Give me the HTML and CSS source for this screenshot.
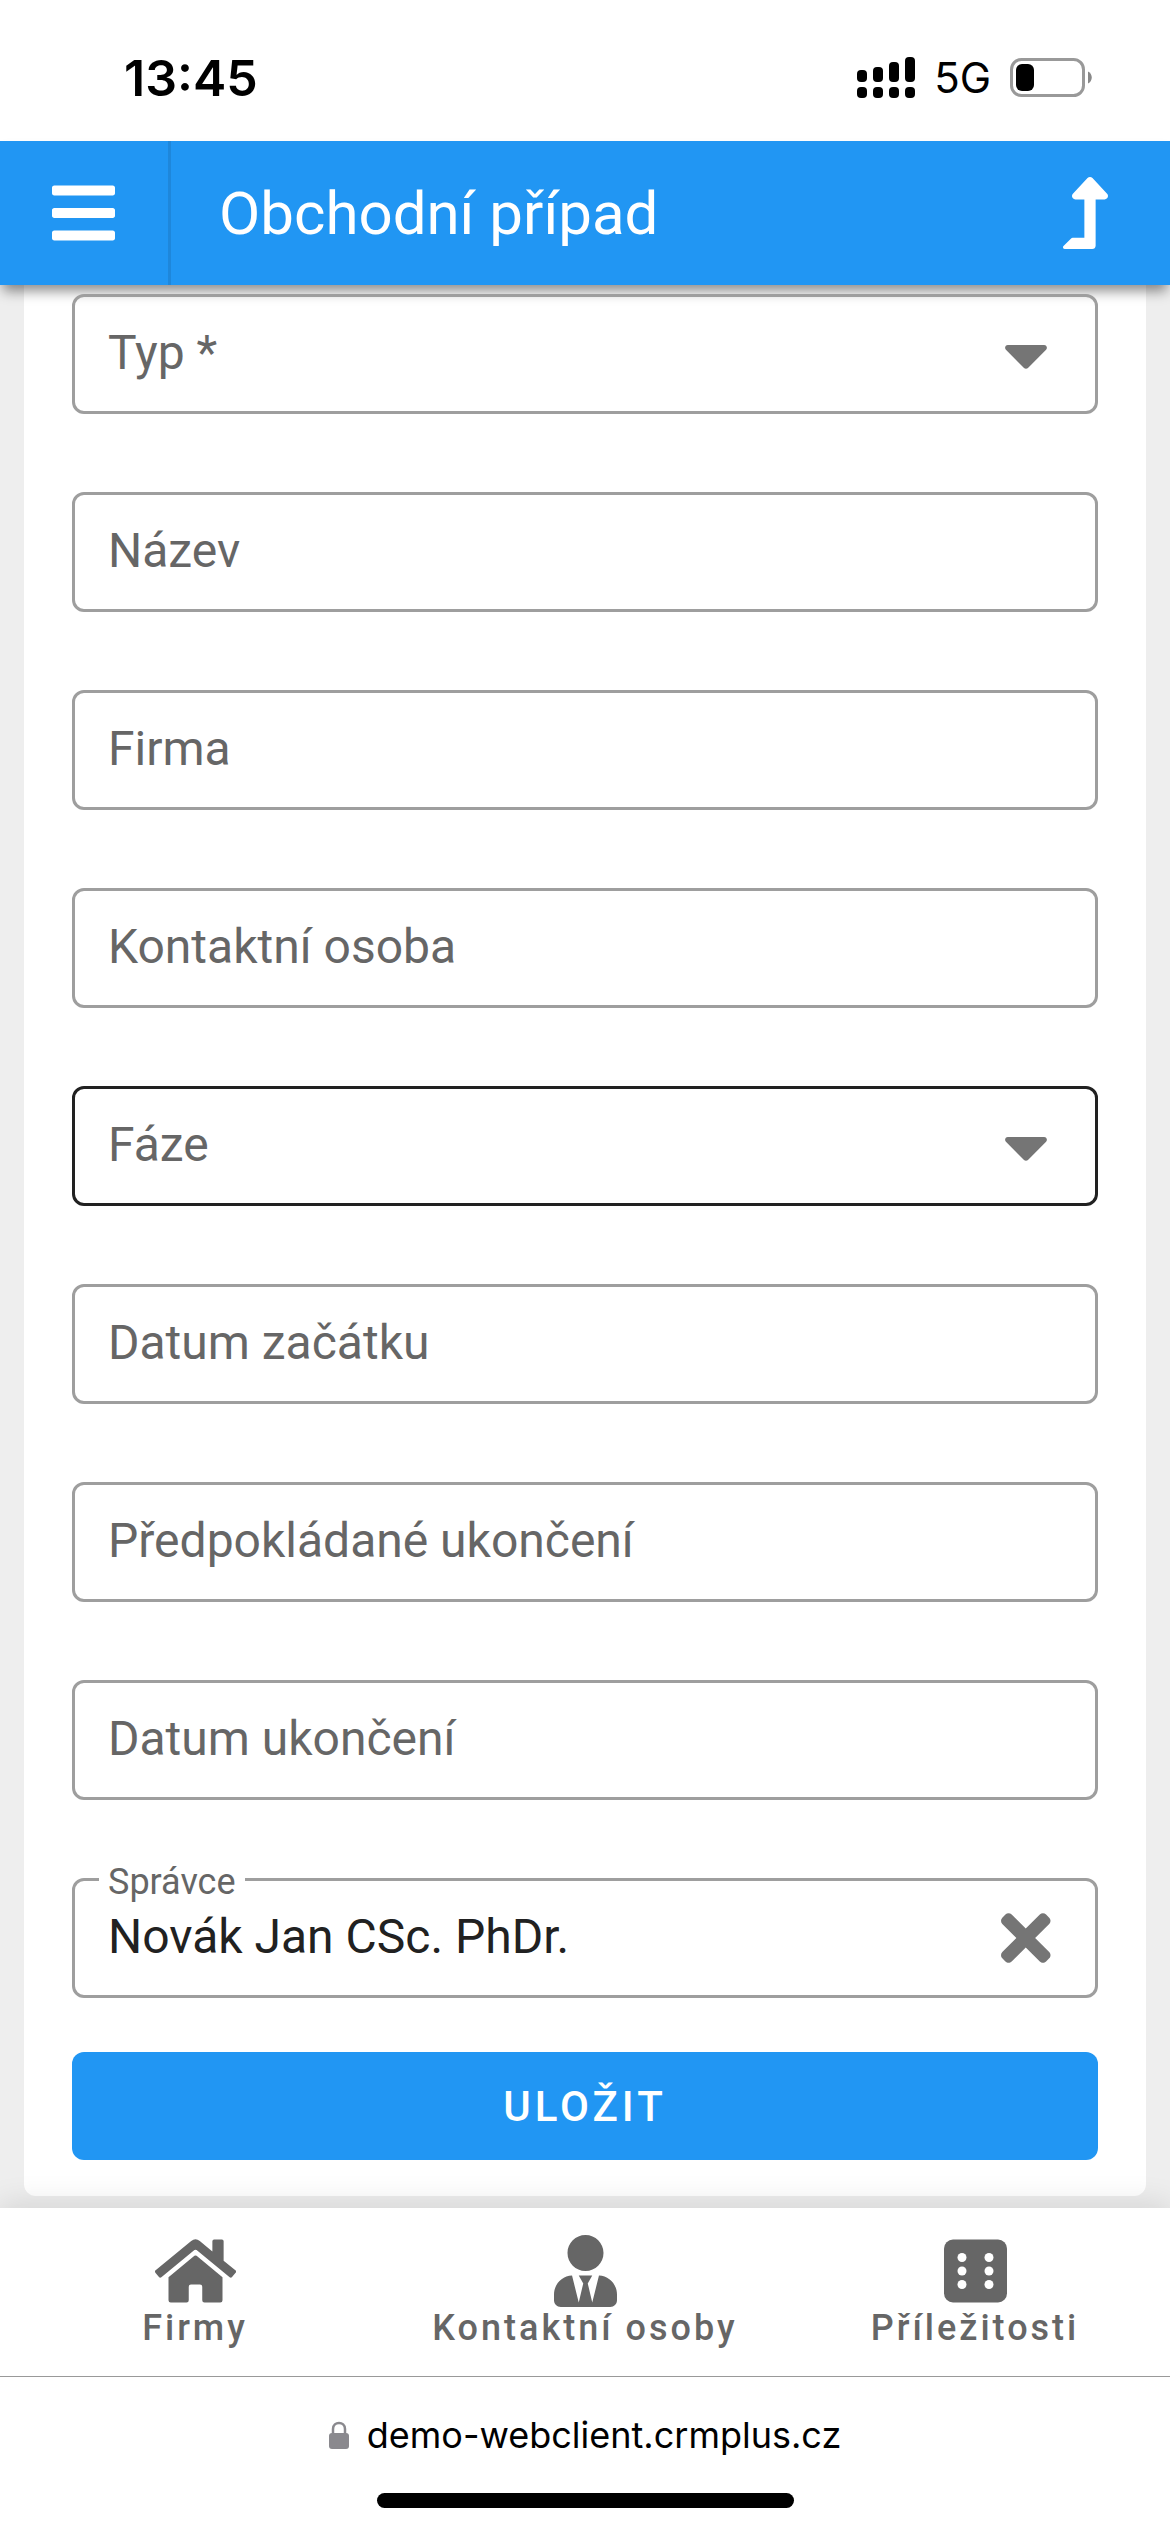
FILE: index.html
```
<!DOCTYPE html>
<html lang="cs">
<head>
    <meta charset="UTF-8">
    <meta name="viewport" content="width=device-width, initial-scale=1.0">
    <title>Obchodní případ</title>
    <link rel="stylesheet" href="styles.css">
</head>
<body>
    <!-- Status bar -->
    <div class="status-bar">
        <span class="status-time">13:45</span>
        <div class="status-icons">
            <svg class="signal-icon" viewBox="0 0 58 42" aria-hidden="true">
                <rect x="0" y="13" width="10" height="12" rx="4"/>
                <rect x="16" y="10" width="10" height="15" rx="4"/>
                <rect x="32" y="5" width="10" height="20" rx="4"/>
                <rect x="48" y="0" width="10" height="25" rx="4"/>
                <rect x="0" y="30" width="10" height="11" rx="4"/>
                <rect x="16" y="30" width="10" height="11" rx="4"/>
                <rect x="32" y="30" width="10" height="11" rx="4"/>
                <rect x="48" y="30" width="10" height="11" rx="4"/>
            </svg>
            <span class="status-network">5G</span>
            <svg class="battery-icon" viewBox="0 0 82 40" aria-hidden="true">
                <rect x="1.5" y="1.5" width="72" height="36" rx="10" fill="none" stroke="#999" stroke-width="3"/>
                <rect x="6" y="6" width="18" height="27" rx="6"/>
                <path d="M78 13.500c5 2 5 10 0 12z" fill="#888"/>
            </svg>
        </div>
    </div>

    <!-- Header -->
    <header class="app-header">
        <button type="button" class="menu-button" aria-label="Menu">
            <svg class="icon" viewBox="0 0 448 512"><path d="M16 132h416c8.837 0 16-7.163 16-16V76c0-8.837-7.163-16-16-16H16C7.163 60 0 67.163 0 76v40c0 8.837 7.163 16 16 16zm0 160h416c8.837 0 16-7.163 16-16v-40c0-8.837-7.163-16-16-16H16c-8.837 0-16 7.163-16 16v40c0 8.837 7.163 16 16 16zm0 160h416c8.837 0 16-7.163 16-16v-40c0-8.837-7.163-16-16-16H16c-8.837 0-16 7.163-16 16v40c0 8.837 7.163 16 16 16z"/></svg>
        </button>
        <h1>Obchodní případ</h1>
        <button type="button" class="up-button" aria-label="O úroveň výš">
            <svg class="icon" viewBox="0 0 320 512"><path d="M313.553 119.669L209.587 7.666c-9.485-10.214-25.676-10.229-35.174 0L70.438 119.669C56.232 134.969 67.062 160 88.025 160H152v272H68.024a11.996 11.996 0 0 0-8.485 3.515l-56 56C-4.021 499.074 1.333 512 12.024 512H208c13.255 0 24-10.745 24-24V160h63.966c20.878 0 31.851-24.969 17.587-40.331z"/></svg>
        </button>
    </header>

    <!-- Form -->
    <main>
        <form class="card">
            <div class="fields">
                <div class="field">
                    <label for="type">Typ *</label>
                    <select id="type" name="type" required>
                        <option value=""></option>
                    </select>
                    <svg class="icon field-icon" viewBox="0 0 320 512"><path d="M31.3 192h257.3c17.8 0 26.7 21.5 14.1 34.1L174.1 354.7c-7.8 7.8-20.5 7.8-28.3 0L17.2 226.1C4.6 213.5 13.5 192 31.3 192z"/></svg>
                </div>
                <div class="field">
                    <label for="name">Název</label>
                    <input type="text" id="name" name="name">
                </div>
                <div class="field">
                    <label for="company">Firma</label>
                    <input type="text" id="company" name="company">
                </div>
                <div class="field">
                    <label for="contact">Kontaktní osoba</label>
                    <input type="text" id="contact" name="contact">
                </div>
                <div class="field active">
                    <label for="phase">Fáze</label>
                    <select id="phase" name="phase">
                        <option value=""></option>
                    </select>
                    <svg class="icon field-icon" viewBox="0 0 320 512"><path d="M31.3 192h257.3c17.8 0 26.7 21.5 14.1 34.1L174.1 354.7c-7.8 7.8-20.5 7.8-28.3 0L17.2 226.1C4.6 213.5 13.5 192 31.3 192z"/></svg>
                </div>
                <div class="field">
                    <label for="startDate">Datum začátku</label>
                    <input type="text" id="startDate" name="startDate">
                </div>
                <div class="field">
                    <label for="expectedDate">Předpokládané ukončení</label>
                    <input type="text" id="expectedDate" name="expectedDate">
                </div>
                <div class="field">
                    <label for="endDate">Datum ukončení</label>
                    <input type="text" id="endDate" name="endDate">
                </div>
                <div class="field filled">
                    <label for="manager">Správce</label>
                    <input type="text" id="manager" name="manager" value="Novák Jan CSc. PhDr.">
                    <button type="button" class="clear-button" aria-label="Vymazat">
                        <svg class="icon" viewBox="0 0 352 512"><path d="M242.72 256l100.07-100.07c12.28-12.28 12.28-32.19 0-44.48l-22.24-22.24c-12.28-12.28-32.19-12.28-44.48 0L176 189.28 75.93 89.21c-12.28-12.28-32.19-12.28-44.48 0L9.21 111.45c-12.28 12.28-12.28 32.19 0 44.48L109.28 256 9.21 356.07c-12.28 12.28-12.28 32.19 0 44.48l22.24 22.24c12.28 12.28 32.2 12.28 44.48 0L176 322.72l100.07 100.07c12.28 12.28 32.2 12.28 44.48 0l22.24-22.24c12.28-12.28 12.28-32.19 0-44.48L242.72 256z"/></svg>
                    </button>
                </div>
            </div>
            <button type="submit" class="save-button">Uložit</button>
        </form>
    </main>

    <!-- Bottom navigation -->
    <nav class="bottom-nav">
        <a href="#firmy">
            <svg class="icon" viewBox="0 0 576 512"><path d="M280.37 148.26L96 300.11V464a16 16 0 0 0 16 16l112.06-.29a16 16 0 0 0 15.92-16V368a16 16 0 0 1 16-16h64a16 16 0 0 1 16 16v95.64a16 16 0 0 0 16 16.05L464 480a16 16 0 0 0 16-16V300L295.67 148.26a12.19 12.19 0 0 0-15.3 0zM571.6 251.47L488 182.56V44.05a12 12 0 0 0-12-12h-56a12 12 0 0 0-12 12v72.61L318.47 43a48 48 0 0 0-61 0L4.34 251.47a12 12 0 0 0-1.6 16.9l25.5 31A12 12 0 0 0 45.15 301l235.22-193.74a12.19 12.19 0 0 1 15.3 0L530.9 301a12 12 0 0 0 16.9-1.6l25.5-31a12 12 0 0 0-1.7-16.93z"/></svg>
            <span>Firmy</span>
        </a>
        <a href="#osoby">
            <svg class="icon" viewBox="0 0 448 512"><path d="M224 256c70.7 0 128-57.3 128-128S294.7 0 224 0 96 57.3 96 128s57.3 128 128 128zm95.8 32.6L272 480l-32-136 32-56h-96l32 56-32 136-47.8-191.4C56.9 292 0 350.3 0 422.4V464c0 26.5 21.5 48 48 48h352c26.5 0 48-21.5 48-48v-41.6c0-72.1-56.9-130.4-128.2-133.8z"/></svg>
            <span>Kontaktní osoby</span>
        </a>
        <a href="#prilezitosti">
            <svg class="icon" viewBox="0 0 448 512">
                <rect y="32" width="448" height="448" rx="64"/>
                <g fill="#fff">
                    <circle cx="128" cy="160" r="32"/>
                    <circle cx="128" cy="256" r="32"/>
                    <circle cx="128" cy="352" r="32"/>
                    <circle cx="320" cy="160" r="32"/>
                    <circle cx="320" cy="256" r="32"/>
                    <circle cx="320" cy="352" r="32"/>
                </g>
            </svg>
            <span>Příležitosti</span>
        </a>
    </nav>

    <!-- Browser address bar -->
    <footer class="browser-bar">
        <div class="address">
            <svg class="lock-icon" viewBox="0 0 20 28" aria-hidden="true">
                <path d="M4 13V8c0-8 12-8 12 0v5" fill="none" stroke="#8a898e" stroke-width="2.500"/>
                <rect y="12" width="20" height="16" rx="3" fill="#8a898e"/>
            </svg>
            <span>demo-webclient.crmplus.cz</span>
        </div>
        <div class="home-indicator"></div>
    </footer>
</body>
</html>
```
FILE: styles.css
```
/* Global styles */
* {
    margin: 0;
    padding: 0;
    box-sizing: border-box;
}

body {
    display: flex;
    flex-direction: column;
    min-height: 100vh;
    background: #eee;
    font-family: Roboto, sans-serif;
    font-size: 48px;
    color: #212121;
}

button, input, select {
    font: inherit;
    color: inherit;
    border: none;
    background: none;
    outline: none;
}

button {
    cursor: pointer;
}

.icon {
    display: block;
    height: 72px;
    fill: currentColor;
}

/* Status bar */
.status-bar {
    display: flex;
    justify-content: space-between;
    align-items: center;
    height: 141px;
    padding: 15px 78px 0 124px;
    background: #fff;
    color: #000;
    font-family: Inter, sans-serif;
}

.status-time {
    font-size: 50px;
    font-weight: 600;
}

.status-icons {
    display: flex;
    align-items: center;
    gap: 19px;
}

.signal-icon {
    width: 58px;
    height: 42px;
}

.status-network {
    font-size: 42px;
    line-height: 48px;
}

.battery-icon {
    width: 82px;
    height: 40px;
}

/* Header */
.app-header {
    position: relative;
    display: flex;
    align-items: center;
    height: 144px;
    background: #2196f3;
    color: #fff;
    box-shadow: 0 9px 12px -3px rgba(0, 0, 0, 0.45);
}

.app-header h1 {
    flex: 1;
    padding-left: 48px;
    font-size: 60px;
    font-weight: 400;
}

.menu-button {
    height: 100%;
    padding: 0 53px 0 52px;
    border-right: 3px solid #1e87db;
}

.up-button {
    padding: 0 62px;
}

/* Form */
main {
    flex: 1;
    padding: 0 24px 12px;
}

.card {
    padding: 9px 48px 36px;
    background: #fff;
    border-radius: 0 0 12px 12px;
}

.fields {
    display: grid;
    gap: 78px;
}

.field {
    position: relative;
    display: grid;
    align-items: center;
    height: 120px;
    border: 3px solid #9e9e9e;
    border-radius: 12px;
}

.field.active {
    border-color: #212121;
}

.field > * {
    grid-area: 1 / 1;
}

.field label {
    padding: 0 33px 3px;
    color: #666;
}

.field input, .field select {
    width: 100%;
    height: 100%;
    padding: 0 120px 3px 33px;
    appearance: none;
}

.field-icon, .clear-button {
    justify-self: end;
    width: 72px;
    margin-right: 33px;
    color: #757575;
    pointer-events: none;
}

.clear-button {
    display: flex;
    justify-content: center;
    pointer-events: auto;
}

/* Label sits on the top border once the field has a value */
.field.filled label {
    position: absolute;
    top: -20px;
    left: 24px;
    padding: 0 9px;
    background: #fff;
    font-size: 36px;
    line-height: 42px;
}

.save-button {
    width: 100%;
    height: 108px;
    margin-top: 54px;
    background: #2196f3;
    border-radius: 12px;
    color: #fff;
    font-size: 42px;
    font-weight: 500;
    letter-spacing: 4px;
    text-transform: uppercase;
}

/* Bottom navigation */
.bottom-nav {
    position: relative;
    display: grid;
    grid-template-columns: repeat(3, 1fr);
    height: 168px;
    padding-top: 27px;
    background: #fff;
    box-shadow: 0 -3px 30px rgba(0, 0, 0, 0.12);
}

.bottom-nav a {
    display: flex;
    flex-direction: column;
    align-items: center;
    color: #666;
    font-size: 36px;
    font-weight: 500;
    line-height: 42px;
    letter-spacing: 3px;
    text-decoration: none;
}

/* Browser bar */
.browser-bar {
    position: relative;
    display: flex;
    flex-direction: column;
    align-items: center;
    justify-content: space-between;
    height: 156px;
    padding: 36px 0 24px;
    background: #fff;
    border-top: 1px solid #999;
    color: #000;
    font-family: Inter, sans-serif;
}

.address {
    display: flex;
    align-items: center;
    gap: 18px;
    font-size: 36px;
    line-height: 44px;
}

.lock-icon {
    width: 20px;
    height: 28px;
}

.home-indicator {
    width: 417px;
    height: 15px;
    border-radius: 8px;
    background: #000;
}
```
